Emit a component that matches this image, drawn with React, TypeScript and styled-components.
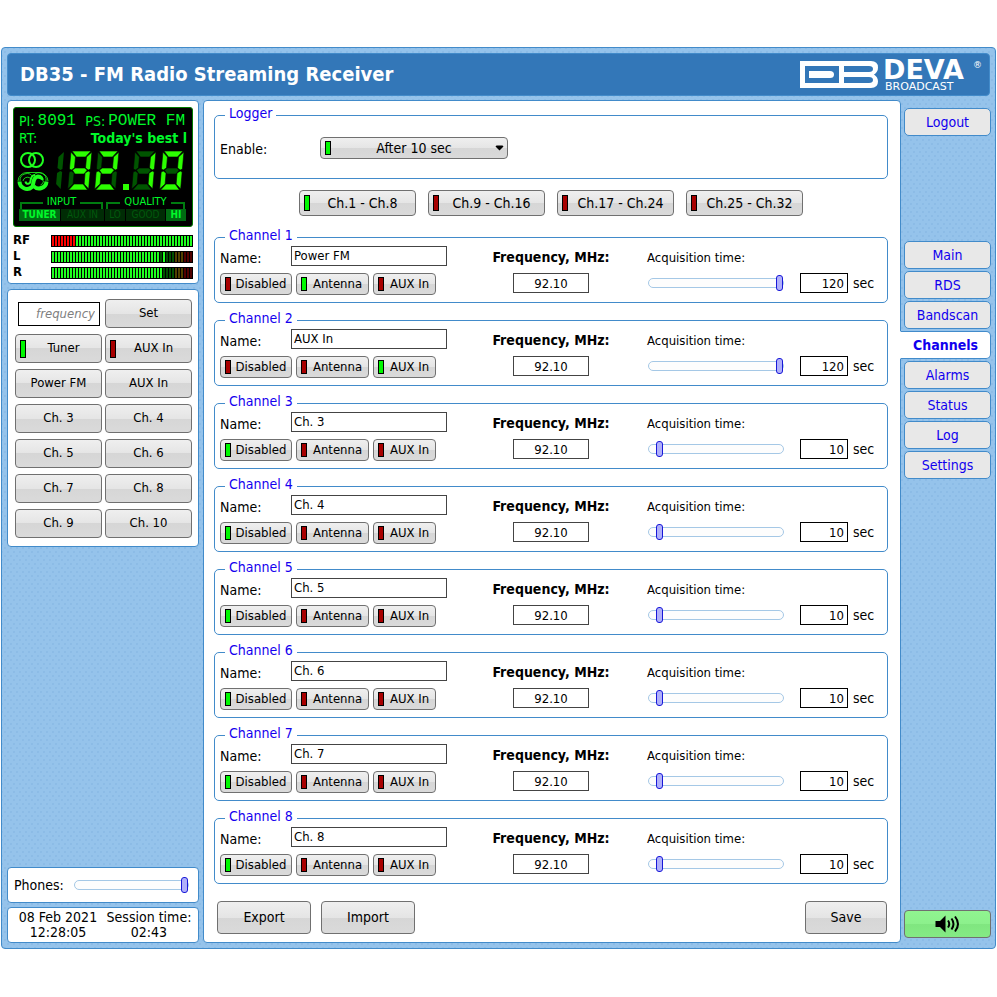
import React from "react";
import styled, { createGlobalStyle, css } from "styled-components";

const sans = `"DejaVu Sans Condensed", "Noto Sans", sans-serif`;
const line = "#428bca";
const lit = "#00f82a";

const GlobalStyle = createGlobalStyle`
  * { box-sizing: border-box; }
  body { margin: 0; background: #fff; color: #000; font-family: ${sans}; font-size: 14px; line-height: 16px; }
  button, input, select { font: inherit; color: inherit; margin: 0; }
`;

const dots = css`
  background-image: radial-gradient(circle, rgba(60, 125, 190, 0.1) 0 1px, transparent 1px),
    radial-gradient(circle, rgba(60, 125, 190, 0.1) 0 1px, transparent 1px);
  background-size: 6px 8px;
  background-position: 0 0, 3px 4px;
`;

const Frame = styled.div`
  margin: 47px 1px;
  padding: 5px 4px 5px 5px;
  border: 1px solid ${line};
  border-radius: 4px;
  background-color: #95c3eb;
  ${dots}
`;

const Header = styled.header`
  display: flex;
  align-items: center;
  justify-content: space-between;
  height: 43px;
  margin-right: 1px;
  padding: 0 7px 0 12px;
  border: 1px solid ${line};
  border-radius: 4px;
  background: #3377b8;
  color: #fff;
`;

const Title = styled.h1`
  margin: 0;
  padding-bottom: 2px;
  font-size: 20px;
  line-height: 24px;
  font-weight: bold;
`;

const LogoArt = styled.svg`
  flex: none;
  overflow: visible;
`;

const Columns = styled.div`
  display: flex;
  margin-top: 4px;
`;

const Side = styled.aside`
  display: flex;
  flex-direction: column;
  flex: 0 0 192px;
  min-width: 0;
  margin-right: 4px;
`;

const Panel = styled.section<{ $pad: string; $gap?: number; $bottom?: boolean }>`
  padding: ${(p) => p.$pad};
  margin-top: ${(p) => (p.$bottom ? "auto" : `${p.$gap ?? 0}px`)};
  border: 1px solid ${line};
  border-radius: 4px;
  background: #fff;
`;

const Display = styled.div`
  height: 120px;
  padding: 5px;
  border: 1px solid #007a00;
  border-radius: 3px;
  background: #000;
  color: ${lit};
`;

const DisplayLine = styled.div`
  display: flex;
  justify-content: space-between;
  height: 17px;
  line-height: 17px;
  white-space: nowrap;
`;

const Station = styled.span`
  display: flex;
  gap: 3px;
  margin-right: 2px;
`;

const Mono = styled.span`
  font-family: "Liberation Mono", monospace;
  font-size: 16px;
`;

const Readout = styled.svg`
  display: block;
  width: 168px;
  height: 40px;
  margin: 4px 0 5px;
  overflow: visible;
`;

const TagGroups = styled.div`
  display: grid;
  grid-template-columns: 85px 81px;
  column-gap: 1px;
`;

const TagTitle = styled.div`
  display: flex;
  gap: 3px;
  height: 12px;
  margin-bottom: 1px;
  font-size: 11px;
  line-height: 12px;

  &::before,
  &::after {
    content: "";
    flex: 1;
    height: 5px;
    margin: 6px 1px 0;
    border: 0 solid #007c10;
    border-top-width: 2px;
  }
  &::before { border-left-width: 2px; }
  &::after { border-right-width: 2px; }
`;

const Tags = styled.div`
  display: flex;
  gap: 1px;
`;

const Tag = styled.span<{ $on?: boolean; $grow: number }>`
  flex: ${(p) => p.$grow} 0 0;
  height: 12px;
  font-size: 10px;
  line-height: 12px;
  text-align: center;
  white-space: nowrap;
  font-weight: ${(p) => (p.$on ? "bold" : "normal")};
  background: ${(p) => (p.$on ? "#006b12" : "#002c05")};
  color: ${(p) => (p.$on ? lit : "#00590c")};
`;

const MeterRow = styled.div<{ $first?: boolean }>`
  display: grid;
  grid-template-columns: 38px 1fr;
  height: 12px;
  margin-top: ${(p) => (p.$first ? 8 : 4)}px;
  font-size: 13px;
  line-height: 10px;
  font-weight: bold;
`;

const Meter = styled.div<{ $stops: string }>`
  border: 1px solid #000;
  background: repeating-linear-gradient(90deg, transparent 0 2px, #000 2px 3px),
    linear-gradient(90deg, ${(p) => p.$stops});
`;

const KeyGrid = styled.div`
  display: grid;
  grid-template-columns: 1fr 1fr;
  gap: 6px 3px;
  align-items: center;
`;

const face = css`
  border: 1px solid #707070;
  border-radius: 4px;
  background: linear-gradient(#efefef, #e5e5e5 50%, #d6d6d6 50%, #dadada);
`;

const Btn = styled.button<{ $h: number; $size?: number; $pad?: number; $w?: number }>`
  ${face}
  display: flex;
  align-items: center;
  height: ${(p) => p.$h}px;
  ${(p) => p.$w && `width: ${p.$w}px;`}
  padding: 0 0 0 ${(p) => p.$pad ?? 0}px;
  font-size: ${(p) => p.$size ?? 14}px;
  line-height: 16px;
  white-space: nowrap;
`;

const Caption = styled.span`
  flex: 1;
  padding-bottom: 1px;
  text-align: center;
`;

const Lamp = styled.i<{ $on?: boolean; $h: number }>`
  flex: none;
  width: 6px;
  height: ${(p) => p.$h}px;
  border: 1px solid #000;
  background: ${(p) => (p.$on ? "#00f800" : "#a80000")};
`;

const FrequencyEntry = styled.input`
  width: 82px;
  height: 24px;
  margin-left: 3px;
  padding: 0 4px;
  border: 1px solid #000;
  background: #fff;
  font-size: 13px;
  text-align: right;

  &::placeholder {
    color: #808080;
    font-style: italic;
    opacity: 1;
  }
`;

const Slider = styled.input.attrs({ type: "range" })`
  appearance: none;
  display: block;
  flex: 1;
  min-width: 0;
  height: 16px;
  background: transparent;

  &::-webkit-slider-runnable-track {
    height: 10px;
    border: 1px solid #a5c8e6;
    border-radius: 5px;
    background: #fdfdfd;
  }
  &::-webkit-slider-thumb {
    appearance: none;
    width: 7px;
    height: 16px;
    margin-top: -4px;
    border: 1px solid #1818d8;
    border-radius: 3px;
    background: #b0b0fa;
  }
`;

const PhonesRow = styled.label`
  display: flex;
  align-items: center;
  gap: 10px;
  height: 34px;
`;

const Clock = styled.div`
  display: grid;
  grid-template-columns: 96px 86px;
  height: 34px;
  padding: 2px 0 2px 2px;
  line-height: 15px;
  text-align: center;
  white-space: nowrap;
`;

const Main = styled.main`
  flex: 1;
  min-width: 0;
  padding: 6px 12px 8px 10px;
  border: 1px solid ${line};
  border-radius: 4px;
  background: #fff;
`;

const Group = styled.fieldset<{ $gap?: number; $pad: string }>`
  min-width: 0;
  margin: ${(p) => p.$gap ?? 0}px 0 0;
  padding: ${(p) => p.$pad};
  border: 1px solid ${line};
  border-radius: 5px;
`;

const Legend = styled.legend`
  height: 17px;
  margin-left: 5px;
  padding: 0 4px;
  line-height: 13px;
  color: #1400ee;
`;

const EnableRow = styled.div`
  display: grid;
  grid-template-columns: 100px 188px;
  align-items: center;

  label { padding-top: 2px; }
`;

const SelectWrap = styled.div`
  position: relative;

  i { position: absolute; left: 5px; top: 4px; }
  svg { position: absolute; right: 4px; top: 8px; pointer-events: none; }
`;

const Select = styled.select`
  ${face}
  appearance: none;
  display: block;
  width: 100%;
  height: 22px;
  padding: 0;
  text-align: center;
  text-align-last: center;
`;

const BankRow = styled.div`
  display: flex;
  justify-content: center;
  gap: 12px;
  margin: 11px 0 13px;
`;

const ChannelGrid = styled.div`
  display: grid;
  grid-template-columns: 235px 1fr 240px;
`;

const Cell = styled.div<{ $center?: boolean }>`
  display: flex;
  flex-direction: column;
  gap: 7px;
  ${(p) => p.$center && "align-items: center;"}
`;

const NameRow = styled.label`
  display: grid;
  grid-template-columns: 71px 156px;
  height: 20px;
  line-height: 24px;
`;

const TextInput = styled.input<{ $center?: boolean }>`
  width: ${(p) => (p.$center ? "76px" : "100%")};
  height: 20px;
  padding: 0 2px;
  border: 1px solid #444;
  background: #fff;
  font-size: 13px;
  text-align: ${(p) => (p.$center ? "center" : "left")};
`;

const Sources = styled.div`
  display: flex;
  gap: 4px;
`;

const FieldLabel = styled.label<{ $bold?: boolean }>`
  height: 20px;
  line-height: ${(p) => (p.$bold ? 22 : 24)}px;
  font-size: ${(p) => (p.$bold ? 14 : 13)}px;
  font-weight: ${(p) => (p.$bold ? "bold" : "normal")};
  white-space: nowrap;
`;

const TimeRow = styled.div`
  display: grid;
  grid-template-columns: 136px 48px auto;
  align-items: center;
  justify-content: start;
  height: 20px;
  padding-left: 1px;
`;

const TimeInput = styled.input`
  width: 48px;
  height: 20px;
  margin-left: 16px;
  padding: 0 3px;
  border: 1px solid #000;
  background: #fff;
  font-size: 13px;
  text-align: right;
`;

const Unit = styled.span`
  margin-left: 21px;
`;

const Actions = styled.div`
  display: flex;
  gap: 10px;
  margin-top: 17px;
  padding: 0 1px 0 3px;

  button:last-child { margin-left: auto; }
`;

const Nav = styled.nav`
  display: flex;
  flex-direction: column;
  flex: 0 0 87px;
  gap: 2px;
  margin-left: 3px;
  padding: 8px 0 5px;
`;

const NavLink = styled.a<{ $active?: boolean; $last?: boolean }>`
  height: 28px;
  border: 1px solid ${line};
  border-radius: 5px;
  background-color: #e8e8e8;
  color: #1000ee;
  line-height: 26px;
  text-align: center;
  text-decoration: none;
  ${(p) => p.$last && "margin-bottom: 103px;"}
  ${(p) =>
    p.$active &&
    css`
      margin-left: -4px;
      border-left-color: #fff;
      border-radius: 0 5px 5px 0;
      background-color: #fff;
      font-weight: bold;
    `}
`;

const SoundButton = styled.button`
  display: flex;
  align-items: center;
  justify-content: center;
  height: 28px;
  margin-top: auto;
  padding: 0;
  border: 1px solid #707070;
  border-radius: 4px;
  background: linear-gradient(#90f590, #8cf08c 50%, #80e680 50%, #84ea84);
`;

const SEGMENTS: Record<string, string> = {
  a: "1,0 20,0 15,6 6,6",
  b: "21,1 21,18 19,19 16,17 16,6",
  c: "21,38 21,21 19,20 16,22 16,33",
  d: "1,39 20,39 15,33 6,33",
  e: "0,38 0,21 2,20 5,22 5,33",
  f: "0,1 0,18 2,19 5,17 5,6",
  g: "3,19 6,17 15,17 18,19 15,23 6,23",
};

function Digit({ x, on }: { x: number; on: string }) {
  return (
    <g transform={`translate(${x + 3} 0) skewX(-5)`} stroke="#000" strokeWidth="0.6">
      {Object.entries(SEGMENTS).map(([key, points]) => (
        <polygon key={key} points={points} fill={on.includes(key) ? "#2cff00" : "#005500"} />
      ))}
    </g>
  );
}

function FrequencyReadout() {
  return (
    <Readout viewBox="0 0 168 40" role="img" aria-label="92.10 MHz, stereo">
      <g fill="none" stroke="#1fff1f" strokeWidth="2">
        <circle cx="9" cy="9" r="7" />
        <circle cx="17" cy="9" r="7" />
      </g>
      <g fill="none" stroke="#1fff1f">
        <path strokeWidth="0.8" d="M-1 30A9 9 0 0 1 8 21.500H20A9 9 0 0 1 29 30" />
        <path strokeWidth="0.8" d="M1 30A7 7 0 0 1 14 26M15 24A7 7 0 0 1 27 30" />
        <path strokeWidth="0.8" d="M4 30A4.500 4.500 0 0 1 11 27M24.500 30A4.500 4.500 0 0 1 21.500 34" />
        <path strokeWidth="4" d="M0.500 30.500A7.500 7.500 0 0 0 13 36C15.500 33 13 26 19 25.500C22 25.500 23 28 22.500 29" />
        <path strokeWidth="4" d="M14.500 35A7.500 7.500 0 0 0 27.500 30.500" />
        <path strokeWidth="2" d="M6.500 30.500C7 34 11.500 33 11.500 30C12 26 14 24 16 24" />
      </g>
      <g transform="translate(36 0) skewX(-5)" fill="#005500">
        <polygon points="9,1 9,18 7,19 4,17 4,6" />
        <polygon points="9,38 9,21 7,20 4,22 4,33" />
      </g>
      <Digit x={49} on="abcdfg" />
      <Digit x={76} on="abdeg" />
      <rect x="104" y="33" width="6" height="6" fill="#2cff00" />
      <Digit x={113} on="bc" />
      <Digit x={141} on="abcdef" />
    </Readout>
  );
}

function Logo() {
  return (
    <LogoArt width="182" height="36" viewBox="0 0 182 36" role="img" aria-label="DEVA Broadcast">
      <path
        fill="#fff"
        fillRule="evenodd"
        d="M0 4H71Q78 4 78 10.500Q78 15 74 17.500Q78 20 78 24.500Q78 31 71 31H0ZM5 9V26H39V9ZM44 9V15H69Q73 15 73 12T69 9ZM44 20V26H69Q73 26 73 23T69 20Z"
      />
      <path fill="#fff" d="M9 14H30Q34 14 34 17.500T30 21H9Z" />
      <g fill="#fff" fontFamily="DejaVu Sans, sans-serif">
        <text x="83" y="22" fontWeight="bold" fontSize="27">DEVA</text>
        <text x="173" y="11" fontSize="9">®</text>
        <text x="85" y="33" fontSize="11">BROADCAST</text>
      </g>
    </LogoArt>
  );
}

function LampButton({ text, on, h, lamp, w, size }: { text: string; on?: boolean; h: number; lamp: number; w?: number; size?: number }) {
  return (
    <Btn type="button" $h={h} $w={w} $size={size} $pad={4} aria-pressed={!!on}>
      <Lamp $on={on} $h={lamp} />
      <Caption>{text}</Caption>
    </Btn>
  );
}

const green = "#1fff1f";
const METERS = [
  { name: "RF", stops: `#f00 0 24px, ${green} 24px` },
  {
    name: "L",
    stops: `${green} 0 108px, #005000 108px 111px, ${green} 111px 114px, #005000 114px 123px, #504000 123px 132px, #500000 132px`,
  },
  { name: "R", stops: `${green} 0 111px, #005000 111px 123px, #504000 123px 132px, #500000 132px` },
];

const PRESETS = ["Power FM", "AUX In", "Ch. 3", "Ch. 4", "Ch. 5", "Ch. 6", "Ch. 7", "Ch. 8", "Ch. 9", "Ch. 10"];
const BANKS = ["Ch.1 - Ch.8", "Ch.9 - Ch.16", "Ch.17 - Ch.24", "Ch.25 - Ch.32"];
const SOURCES = [
  { name: "Disabled", width: 72 },
  { name: "Antenna", width: 73 },
  { name: "AUX In", width: 63 },
];
const CHANNELS = [
  { name: "Power FM", source: "Antenna", time: 120 },
  { name: "AUX In", source: "AUX In", time: 120 },
  ...[3, 4, 5, 6, 7, 8].map((n) => ({ name: `Ch. ${n}`, source: "Disabled", time: 10 })),
];
const PAGES = ["Main", "RDS", "Bandscan", "Channels", "Alarms", "Status", "Log", "Settings"];

function Channel({ index }: { index: number }) {
  const channel = CHANNELS[index];
  const id = `channel-${index + 1}`;
  return (
    <Group $pad="0 0 7px 5px" $gap={index ? 9 : 0}>
      <Legend>Channel {index + 1}</Legend>
      <ChannelGrid>
        <Cell>
          <NameRow>
            <span>Name:</span>
            <TextInput defaultValue={channel.name} />
          </NameRow>
          <Sources>
            {SOURCES.map((s) => (
              <LampButton key={s.name} text={s.name} on={s.name === channel.source} h={22} lamp={14} w={s.width} size={13} />
            ))}
          </Sources>
        </Cell>
        <Cell $center>
          <FieldLabel $bold htmlFor={`${id}-frequency`}>Frequency, MHz:</FieldLabel>
          <TextInput $center id={`${id}-frequency`} defaultValue="92.10" />
        </Cell>
        <Cell>
          <FieldLabel htmlFor={`${id}-time`}>Acquisition time:</FieldLabel>
          <TimeRow>
            <Slider min={4} max={120} defaultValue={channel.time} aria-label={`Channel ${index + 1} acquisition time`} />
            <TimeInput id={`${id}-time`} defaultValue={channel.time} />
            <Unit>sec</Unit>
          </TimeRow>
        </Cell>
      </ChannelGrid>
    </Group>
  );
}

export default function App() {
  return (
    <>
      <GlobalStyle />
      <Frame>
        <Header>
          <Title>DB35 - FM Radio Streaming Receiver</Title>
          <Logo />
        </Header>
        <Columns>
          <Side>
            <Panel $pad="6px 5px 4px">
              <Display>
                <DisplayLine>
                  <Station>PI:<Mono>8091</Mono></Station>
                  <Station>PS:<Mono>POWER FM</Mono></Station>
                </DisplayLine>
                <DisplayLine>
                  <span>RT:</span>
                  <strong>Today's best l</strong>
                </DisplayLine>
                <FrequencyReadout />
                <TagGroups>
                  <div>
                    <TagTitle>INPUT</TagTitle>
                    <Tags>
                      <Tag $on $grow={41}>TUNER</Tag>
                      <Tag $grow={43}>AUX IN</Tag>
                    </Tags>
                  </div>
                  <div>
                    <TagTitle>QUALITY</TagTitle>
                    <Tags>
                      <Tag $grow={20}>LO</Tag>
                      <Tag $grow={39}>GOOD</Tag>
                      <Tag $on $grow={20}>HI</Tag>
                    </Tags>
                  </div>
                </TagGroups>
              </Display>
              {METERS.map((m, i) => (
                <MeterRow key={m.name} $first={i === 0}>
                  <span>{m.name}</span>
                  <Meter $stops={m.stops} role="img" aria-label={`${m.name} level`} />
                </MeterRow>
              ))}
            </Panel>
            <Panel $pad="9px 6px 8px 7px" $gap={5}>
              <KeyGrid>
                <FrequencyEntry placeholder="frequency" aria-label="frequency" />
                <Btn type="button" $h={29} $size={13}><Caption>Set</Caption></Btn>
                <LampButton text="Tuner" on h={29} lamp={18} size={13} />
                <LampButton text="AUX In" h={29} lamp={18} size={13} />
                {PRESETS.map((name) => (
                  <Btn key={name} type="button" $h={29} $size={13}><Caption>{name}</Caption></Btn>
                ))}
              </KeyGrid>
            </Panel>
            <Panel $pad="0 9px 0 6px" $bottom>
              <PhonesRow>
                Phones:
                <Slider defaultValue={100} />
              </PhonesRow>
            </Panel>
            <Panel $pad="0" $gap={4}>
              <Clock>
                <div>08 Feb 2021<br />12:28:05</div>
                <div>Session time:<br />02:43</div>
              </Clock>
            </Panel>
          </Side>
          <Main>
            <Group $pad="13px 5px 19px">
              <Legend>Logger</Legend>
              <EnableRow>
                <label htmlFor="logger-enable">Enable:</label>
                <SelectWrap>
                  <Select id="logger-enable" defaultValue="10">
                    <option value="0">Disabled</option>
                    <option value="10">After 10 sec</option>
                  </Select>
                  <Lamp $on $h={14} />
                  <svg width="9" height="6" viewBox="0 0 9 6" aria-hidden="true">
                    <path d="M0.500 1.500L1.500 0.500H7.500L8.500 1.500L4.500 5.500Z" />
                  </svg>
                </SelectWrap>
              </EnableRow>
            </Group>
            <BankRow>
              {BANKS.map((name, i) => (
                <LampButton key={name} text={name} on={i === 0} h={26} lamp={16} w={117} />
              ))}
            </BankRow>
            {CHANNELS.map((c, i) => (
              <Channel key={c.name} index={i} />
            ))}
            <Actions>
              <Btn type="button" $h={33} $w={94}><Caption>Export</Caption></Btn>
              <Btn type="button" $h={33} $w={94}><Caption>Import</Caption></Btn>
              <Btn type="button" $h={33} $w={82}><Caption>Save</Caption></Btn>
            </Actions>
          </Main>
          <Nav>
            <NavLink href="#logout" $last>Logout</NavLink>
            {PAGES.map((name) => (
              <NavLink key={name} href={`#${name.toLowerCase()}`} $active={name === "Channels"}>{name}</NavLink>
            ))}
            <SoundButton type="button" aria-label="Sound">
              <svg width="26" height="18" viewBox="0 0 26 18" aria-hidden="true">
                <path d="M0.500 6H5L10.500 0.500V17.500L5 12H0.500Z" />
                <g fill="none" stroke="#000" strokeWidth="2">
                  <path d="M13 5.500Q15.500 9 13 12.500" />
                  <path d="M16.500 3.500Q20.500 9 16.500 14.500" />
                  <path d="M20 1.500Q26 9 20 16.500" />
                </g>
              </svg>
            </SoundButton>
          </Nav>
        </Columns>
      </Frame>
    </>
  );
}
